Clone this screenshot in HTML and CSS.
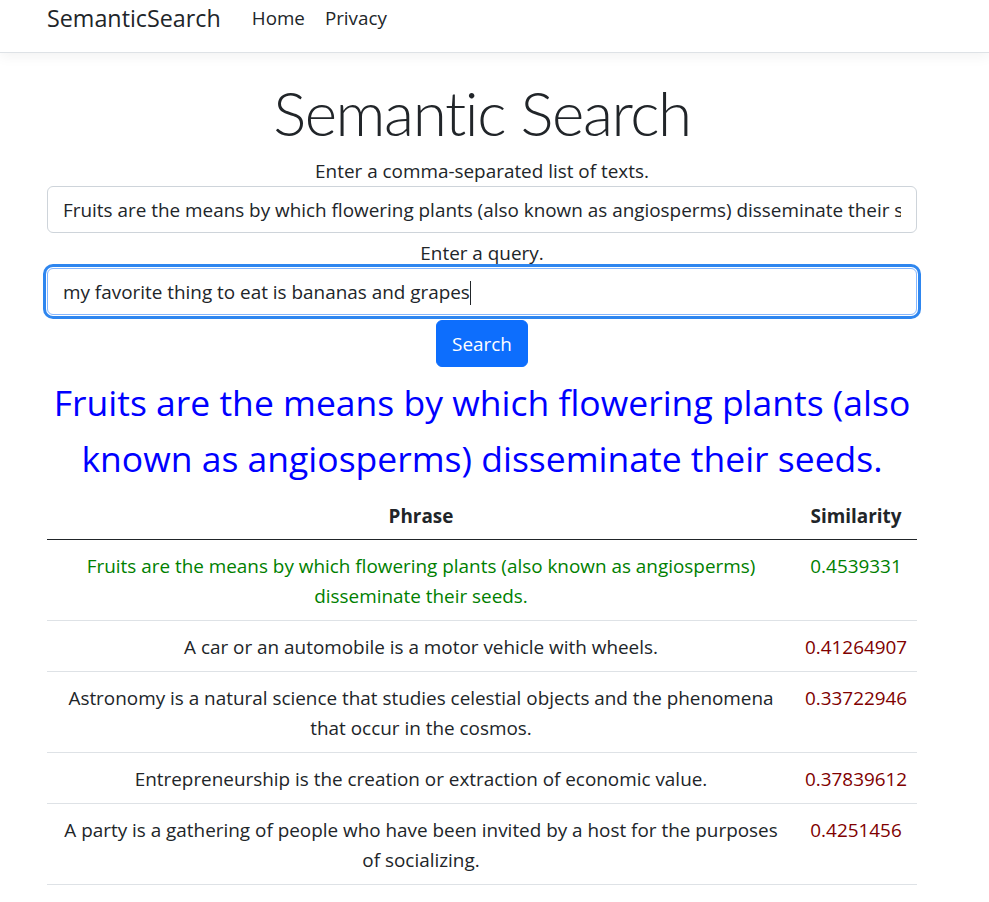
FILE: index.html
```html
<!DOCTYPE html>
<html lang="en">
<head>
<meta charset="utf-8">
<title>Semantic Search</title>
<link rel="stylesheet" href="styles.css">
</head>
<body>
<header class="navbar">
  <div class="nav-inner">
    <a class="brand" href="#">SemanticSearch</a>
    <ul class="nav">
      <li><a class="nav-link" href="#">Home</a></li>
      <li><a class="nav-link" href="#">Privacy</a></li>
    </ul>
  </div>
</header>
<main class="container">
  <h1 class="title">Semantic Search</h1>
  <form class="search-form">
    <label class="label" for="texts">Enter a comma-separated list of texts.</label>
    <input class="form-control" id="texts" type="text" value="Fruits are the means by which flowering plants (also known as angiosperms) disseminate their seeds., A car or an automobile is a motor vehicle with wheels.">
    <label class="label" for="query">Enter a query.</label>
    <div class="form-control focused" id="query">my favorite thing to eat is bananas and grapes<span class="caret"></span></div>
    <button class="btn" type="button">Search</button>
  </form>
  <h2 class="result">Fruits are the means by which flowering plants (also known as angiosperms) disseminate their seeds.</h2>
  <table class="table">
    <thead>
      <tr><th class="col-phrase">Phrase</th><th class="col-sim">Similarity</th></tr>
    </thead>
    <tbody>
      <tr class="best"><td>Fruits are the means by which flowering plants (also known as angiosperms) disseminate their seeds.</td><td class="sim">0.4539331</td></tr>
      <tr><td>A car or an automobile is a motor vehicle with wheels.</td><td class="sim low">0.41264907</td></tr>
      <tr><td>Astronomy is a natural science that studies celestial objects and the phenomena that occur in the cosmos.</td><td class="sim low">0.33722946</td></tr>
      <tr><td>Entrepreneurship is the creation or extraction of economic value.</td><td class="sim low">0.37839612</td></tr>
      <tr><td>A party is a gathering of people who have been invited by a host for the purposes of socializing.</td><td class="sim low">0.4251456</td></tr>
    </tbody>
  </table>
</main>
</body>
</html>
```
FILE: styles.css
```css
* { box-sizing: border-box; }
html, body { margin: 0; padding: 0; }
body {
  font-family: "Open Sans", "Noto Sans", sans-serif;
  font-size: 18.9px;
  line-height: 30px;
  color: #212529;
  background: #fff;
}
a { text-decoration: none; color: inherit; }

.navbar {
  height: 53px;
  background: #fff;
  border-bottom: 1px solid #dee2e6;
  box-shadow: 0 4px 12px rgba(0,0,0,.05);
}
.nav-inner {
  display: flex;
  align-items: center;
  height: 52px;
  padding-left: 47px;
  padding-bottom: 16px;
}
.brand {
  font-size: 23.3px;
  line-height: 30px;
  margin-right: 21px;
  color: #212529;
}
.nav {
  display: flex;
  list-style: none;
  margin: 0;
  padding: 0;
}
.nav-link {
  display: block;
  padding: 0 10px;
  color: #212529;
  font-size: 18.8px;
}

.container {
  width: 870px;
  margin-left: 47px;
  text-align: center;
}
.title {
  font-family: Lato, "Open Sans", sans-serif;
  font-variant-ligatures: none;
  font-size: 62px;
  letter-spacing: -1.4px;
  font-weight: 300;
  line-height: 84px;
  margin: 17px 0 2px;
}
.search-form {
  display: flex;
  flex-direction: column;
  align-items: center;
}
.label {
  display: block;
  width: 100%;
}
.form-control {
  display: block;
  width: 100%;
  height: 47px;
  padding: 7.5px 15px;
  font: inherit;
  line-height: 30px;
  color: #212529;
  background: #fff;
  border: 1px solid #ced4da;
  border-radius: 6px;
  margin-bottom: 5px;
  text-align: left;
  white-space: nowrap;
  overflow: hidden;
}
.focused {
  border-color: #86b7fe;
  box-shadow: 0 0 0 1px #fff, 0 0 0 4px #2e86ef;
}
.caret {
  display: inline-block;
  width: 1px;
  height: 24px;
  background: #212529;
  vertical-align: -6px;
}
.btn {
  font: inherit;
  line-height: 30px;
  color: #fff;
  background: #0d6efd;
  border: 1px solid #0d6efd;
  border-radius: 6px;
  padding: 7.5px 15px;
  height: 47px;
}
.result {
  color: #0000ff;
  font-size: 35.5px;
  font-weight: 400;
  line-height: 56px;
  margin: 7px 0 3px;
}
.table {
  width: 100%;
  border-collapse: collapse;
  table-layout: fixed;
}
.table th, .table td {
  padding: 11px 10px 9px;
  line-height: 30px;
  text-align: center;
  vertical-align: top;
}
.table th {
  font-weight: 700;
  padding-top: 12px;
  padding-bottom: 8px;
  border-bottom: 1px solid #212529;
}
.table td {
  border-bottom: 1px solid #dee2e6;
}
.col-phrase { width: 748px; }
.col-sim { width: 122px; }
.best td { color: #008000; }
.low { color: #800000; }
```
